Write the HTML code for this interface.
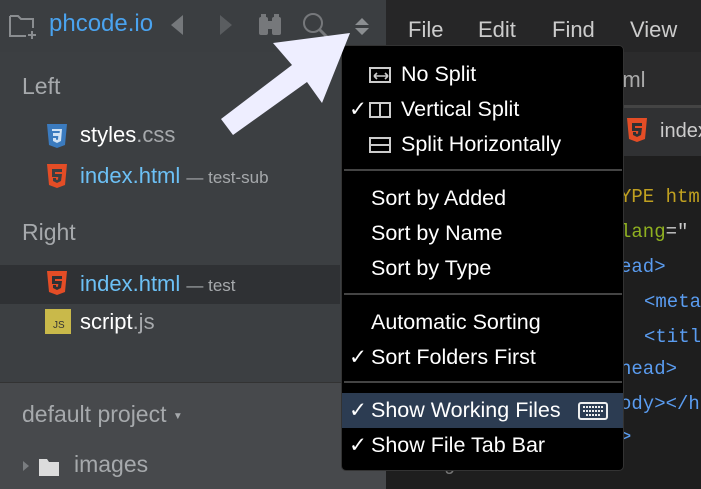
<!DOCTYPE html>
<html><head><meta charset="utf-8"><style>
*{margin:0;padding:0;box-sizing:border-box}
body{width:701px;height:489px;overflow:hidden;background:#1e1f22;font-family:"Liberation Sans","DejaVu Sans",sans-serif;position:relative}
.a{position:absolute;white-space:nowrap}
#side{position:absolute;left:0;top:0;width:386px;height:489px;background:#3c3f42}
#stop{position:absolute;left:0;top:0;width:386px;height:52px;background:#3b3e41}
#proj{position:absolute;left:0;top:382px;width:386px;height:107px;background:#47494c;border-top:1px solid #333}
#ed{position:absolute;left:386px;top:0;width:315px;height:489px;background:#1e1e1e}
.t{font-size:22px;line-height:26px}
.code{font-family:"Liberation Mono","DejaVu Sans Mono",monospace;font-size:19px}
#menu{position:absolute;left:341px;top:45px;width:283px;height:426px;background:#000;border:1px solid #333;border-radius:5px}
.mi{position:absolute;left:0;width:281px;height:35px;color:#fff;font-size:21.5px;line-height:35px}
.mi .ck{position:absolute;left:7px}
.mi .lb{position:absolute;left:29px}
.sep{position:absolute;left:2px;width:278px;height:2px;background:#444}
.ic{position:absolute;width:22px;height:16px;border:2px solid #ccc;top:10px;left:27px}
</style></head><body>
<div id="side"></div><div id="stop"></div>
<svg class="a" style="left:8px;top:12px" width="30" height="28" viewBox="0 0 30 28"><path d="M2 4h8l3 3h12v9M2 4v20h16" fill="none" stroke="#8a8d90" stroke-width="2"/><path d="M24 19v8M20 23h8" stroke="#8a8d90" stroke-width="2"/></svg>
<div class="a" style="left:49px;top:10px;font-size:24px;color:#4aa3ef">phcode.io</div>
<svg class="a" style="left:170px;top:15px" width="15" height="20"><path d="M13 0L1 10l12 10z" fill="#75787b"/></svg>
<svg class="a" style="left:218px;top:15px" width="15" height="20"><path d="M2 0l12 10L2 20z" fill="#5a5d60"/></svg>
<svg class="a" style="left:257px;top:13px" width="26" height="24"><rect x="2" y="4" width="9" height="18" rx="2" fill="#76787b"/><rect x="15" y="4" width="9" height="18" rx="2" fill="#76787b"/><rect x="9" y="8" width="8" height="8" fill="#76787b"/><rect x="4" y="1" width="5" height="4" fill="#76787b"/><rect x="17" y="1" width="5" height="4" fill="#76787b"/></svg>
<svg class="a" style="left:301px;top:11px" width="30" height="30"><circle cx="12" cy="12" r="9" fill="none" stroke="#76787b" stroke-width="2"/><path d="M18 18l9 9" stroke="#76787b" stroke-width="3"/></svg>
<svg class="a" style="left:354px;top:18px" width="16" height="18"><path d="M1 7L8 0l7 7z M1 10l7 7 7-7z" fill="#8b8e91"/></svg>
<div class="a t" style="left:22px;top:73px;color:#a6a9ac;font-size:23px">Left</div>
<svg class="a" style="left:46px;top:124px" width="22" height="24" viewBox="0 0 22 24"><path d="M1 0h20l-2 21-8 3-8-3z" fill="#3b7bbf"/><path d="M6 5h10l-1 12-4 2-4-2v-3h3v1.5l1 .5 1-.5.3-3.5H7v-3h6.6l.2-2H6z" fill="#d0e2f4"/></svg>
<div class="a t" style="left:80px;top:122px;color:#fff">styles<span style="color:#a6a9ac">.css</span></div>
<svg class="a" style="left:46px;top:164px" width="22" height="24" viewBox="0 0 22 24"><path d="M1 0h20l-2 21-8 3-8-3z" fill="#e44d26"/><path d="M6 5h10v3H9v2h7l-1 7-4 2-4-2v-3h3v1.5l1 .5 1-.5.3-2.5H6z" fill="#3c3f42"/></svg>
<div class="a t" style="left:80px;top:163px;color:#6cc0f5">index.html <span style="color:#a6a9ac;font-size:17px">— test-sub</span></div>
<div class="a t" style="left:22px;top:219px;color:#a6a9ac;font-size:23px">Right</div>
<div class="a" style="left:0;top:265px;width:340px;height:39px;background:#2f3134"></div>
<svg class="a" style="left:46px;top:271px" width="22" height="24" viewBox="0 0 22 24"><path d="M1 0h20l-2 21-8 3-8-3z" fill="#e44d26"/><path d="M6 5h10v3H9v2h7l-1 7-4 2-4-2v-3h3v1.5l1 .5 1-.5.3-2.5H6z" fill="#2f3134"/></svg>
<div class="a t" style="left:80px;top:271px;color:#6cc0f5">index.html <span style="color:#a6a9ac;font-size:17px">— test</span></div>
<div class="a" style="left:45px;top:309px;width:26px;height:25px;background:#c9b94a;color:#333;font-size:10px;line-height:12px;padding:11px 0 0 8px">JS</div>
<div class="a t" style="left:80px;top:309px;color:#fff">script<span style="color:#a6a9ac">.js</span></div>
<div id="proj"></div>
<div class="a t" style="left:22px;top:401px;color:#a6a9ac;font-size:23px">default project <span style="font-size:10px;position:relative;top:-3px">▼</span></div>
<svg class="a" style="left:22px;top:456px" width="60" height="22"><path d="M1 5l6 5-6 5z" fill="#7a7d80"/><path d="M17 3h8l2 3h10v14H17z" fill="#dcdcdc"/></svg>
<div class="a t" style="left:74px;top:451px;color:#a6a9ac;font-size:23px">images</div>
<div id="ed">
<div class="a" style="left:0;top:0;width:315px;height:52px;background:#262627"></div>
<div class="a t" style="left:22px;top:17px;color:#ccc">File</div>
<div class="a t" style="left:92px;top:17px;color:#ccc">Edit</div>
<div class="a t" style="left:166px;top:17px;color:#ccc">Find</div>
<div class="a t" style="left:244px;top:17px;color:#ccc">View</div>
<div class="a" style="left:0;top:52px;width:315px;height:53px;background:#2b2b2c"></div>
<div class="a t" style="left:218px;top:67px;color:#aaa">html</div>
<div class="a" style="left:0;top:105px;width:315px;height:3px;background:#444"></div>
<div class="a" style="left:0;top:108px;width:315px;height:48px;background:#303133"></div>
<svg class="a" style="left:240px;top:118px" width="22" height="24" viewBox="0 0 22 24"><path d="M1 0h20l-2 21-8 3-8-3z" fill="#e44d26"/><path d="M6 5h10v3H9v2h7l-1 7-4 2-4-2v-3h3v1.5l1 .5 1-.5.3-2.5H6z" fill="#303133"/></svg>
<div class="a t" style="left:274px;top:118px;color:#ccc;font-size:20px">index</div>
<div class="a code" style="left:234px;top:186px;color:#c0a020">YPE html</div>
<div class="a code" style="left:234px;top:221px;color:#8fb020">lang<span style="color:#ccc">="</span></div>
<div class="a code" style="left:234px;top:256px;color:#5a9cf0">ead&gt;</div>
<div class="a code" style="left:258px;top:291px;color:#5a9cf0">&lt;meta</div>
<div class="a code" style="left:258px;top:326px;color:#5a9cf0">&lt;titl</div>
<div class="a code" style="left:234px;top:358px;color:#5a9cf0">head&gt;</div>
<div class="a code" style="left:234px;top:393px;color:#5a9cf0">ody&gt;&lt;/h</div>
<div class="a code" style="left:234px;top:426px;color:#5a9cf0">&gt;</div>
<div class="a code" style="left:58px;top:458px;color:#777">9</div>
</div>
<div id="menu">
<div class="mi" style="top:11px"><div class="ic"></div><svg class="a" style="left:31px;top:14px" width="16" height="10"><path d="M1 5h14M1 5l3-3M1 5l3 3M15 5l-3-3M15 5l-3 3" stroke="#ccc" stroke-width="1.6" fill="none"/></svg><span class="lb" style="left:59px">No Split</span></div>
<div class="mi" style="top:46px"><span class="ck">✓</span><div class="ic"></div><div class="a" style="left:37px;top:10px;width:2px;height:16px;background:#ccc"></div><span class="lb" style="left:59px">Vertical Split</span></div>
<div class="mi" style="top:81px"><div class="ic"></div><div class="a" style="left:27px;top:17px;width:22px;height:2px;background:#ccc"></div><span class="lb" style="left:59px">Split Horizontally</span></div>
<div class="sep" style="top:123px"></div>
<div class="mi" style="top:135px"><span class="lb">Sort by Added</span></div>
<div class="mi" style="top:170px"><span class="lb">Sort by Name</span></div>
<div class="mi" style="top:205px"><span class="lb">Sort by Type</span></div>
<div class="sep" style="top:247px"></div>
<div class="mi" style="top:259px"><span class="lb">Automatic Sorting</span></div>
<div class="mi" style="top:294px"><span class="ck">✓</span><span class="lb">Sort Folders First</span></div>
<div class="sep" style="top:335px"></div>
<div class="mi" style="top:347px;background:#2c3c52"><span class="ck">✓</span><span class="lb">Show Working Files</span><svg class="a" style="left:236px;top:9px" width="30" height="18"><rect x="1" y="1" width="28" height="16" rx="2" fill="none" stroke="#eee" stroke-width="2"/><path d="M5 5h20M5 9h20M8 13h14" stroke="#eee" stroke-width="2" stroke-dasharray="2 1"/></svg></div>
<div class="mi" style="top:382px"><span class="ck">✓</span><span class="lb">Show File Tab Bar</span></div>
</div>
<svg class="a" style="left:0;top:0" width="701" height="489"><polygon points="350,33 322,103 307,82 233,135 221,119 292,65 273,43" fill="#eeeeff"/></svg>
</body></html>
